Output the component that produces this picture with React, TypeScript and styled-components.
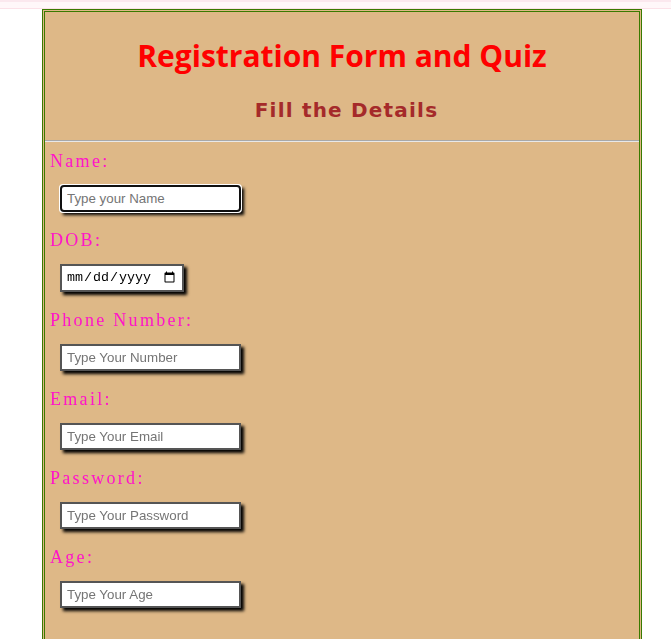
import React from "react";
import styled, { createGlobalStyle } from "styled-components";

const Global = createGlobalStyle`
  html, body { margin: 0; padding: 0; background: #ffffff; }
  body { font-family: "Liberation Serif", serif; }
`;

const TopStrip = styled.div`
  height: 6px;
  background: #fff7f9;
  border-top: 2px solid #fbe8ee;
  border-bottom: 1px solid #fbe1e8;
`;

const Card = styled.div`
  margin-left: 42px;
  width: 600px;
  box-sizing: border-box;
  background: #deb887;
  border: 3px double #3a7a00;
  padding-bottom: 60px;
`;

const Header = styled.header`
  text-align: center;
  padding-top: 24px;
  padding-bottom: 18px;
`;

const Title = styled.h1`
  margin: 0;
  color: #ff0000;
  font-family: "Open Sans", sans-serif;
  font-weight: 700;
  font-size: 30px;
  line-height: 40px;
`;

const Subtitle = styled.h3`
  margin: 22px 0 0;
  padding-left: 9px;
  color: #a52a2a;
  font-family: "DejaVu Sans", sans-serif;
  font-weight: 700;
  font-size: 20px;
  line-height: 24px;
  letter-spacing: 1.2px;
`;

const Rule = styled.hr`
  margin: 0;
  border: 0;
  height: 2px;
  background: linear-gradient(#a8a8a8 0 1px, #e8e8e8 1px 2px);
`;

const Form = styled.form`
  padding: 9px 5px 0;
  display: flex;
  flex-direction: column;
`;

const Field = styled.div`
  display: flex;
  flex-direction: column;
  align-items: flex-start;
  margin-bottom: 18px;
`;

const Label = styled.label`
  color: #ff14c8;
  font-family: "Liberation Serif", serif;
  font-size: 18px;
  line-height: 21px;
  letter-spacing: 2.3px;
`;

const Input = styled.input<{ $w?: number }>`
  margin: 13px 0 0 10px;
  width: ${(p) => p.$w ?? 181}px;
  height: 27px;
  box-sizing: border-box;
  border: 2px solid #555555;
  padding: 3px 5px;
  background: #ffffff;
  box-shadow: 3px 3px 3px #000000;
  font-family: "Liberation Sans", Arial, sans-serif;
  font-size: 13.33px;
  color: #000;
  &::placeholder { color: #757575; }
`;

const DateInput = styled(Input)`
  height: 28px;
  font-family: "Liberation Mono", monospace;
  font-size: 13.33px;
  padding: 3px 4px;
`;

const fields = [
  { id: "name", label: "Name:", type: "text", ph: "Type your Name" },
  { id: "dob", label: "DOB:", type: "date", ph: "" },
  { id: "phone", label: "Phone Number:", type: "tel", ph: "Type Your Number" },
  { id: "email", label: "Email:", type: "email", ph: "Type Your Email" },
  { id: "password", label: "Password:", type: "password", ph: "Type Your Password" },
  { id: "age", label: "Age:", type: "number", ph: "Type Your Age" },
];

export default function App() {
  return (
    <>
      <Global />
      <TopStrip />
      <Card>
        <Header>
          <Title>Registration Form and Quiz</Title>
          <Subtitle>Fill the Details</Subtitle>
        </Header>
        <Rule />
        <Form onSubmit={(e) => e.preventDefault()}>
          {fields.map((f) => (
            <Field key={f.id}>
              <Label htmlFor={f.id}>{f.label}</Label>
              {f.type === "date" ? (
                <DateInput id={f.id} type="date" $w={124} />
              ) : (
                <Input
                  id={f.id}
                  type={f.type === "number" ? "text" : f.type}
                  placeholder={f.ph}
                  autoFocus={f.id === "name"}
                />
              )}
            </Field>
          ))}
        </Form>
      </Card>
    </>
  );
}
